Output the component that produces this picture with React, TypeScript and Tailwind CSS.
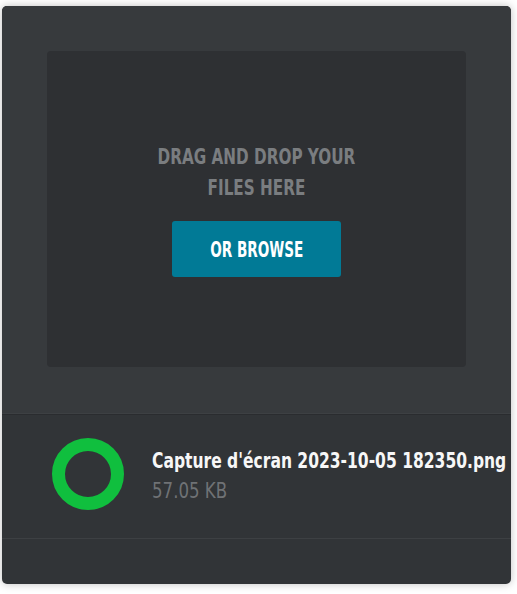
import React from "react";

const font = { fontFamily: '"DejaVu Sans Condensed", "DejaVu Sans", sans-serif' };

export default function App() {
  return (
    <div className="min-h-[594px] w-[517px] bg-white pt-[6px] pl-[2px]" style={font}>
      <div className="w-[509px] overflow-hidden rounded-[5px] bg-[#313437] shadow-[0_0_8px_rgba(0,0,0,0.25)]">
        <div className="bg-[#373a3d] px-[45px] pt-[45px] pb-[46px]">
          <div className="flex h-[316px] flex-col items-center rounded-[4px] bg-[#2e3033] pt-[90px]">
            <div className="scale-x-[0.77] text-center text-[22px] font-bold leading-[31px] whitespace-nowrap text-[#7a7d80]">
              DRAG AND DROP YOUR
              <br />
              FILES HERE
            </div>
            <button className="mt-[18px] flex h-[56px] w-[169px] items-center justify-center rounded-[3px] bg-[#017a96] pt-[3px] text-white">
              <span className="scale-x-[0.72] text-[21px] font-bold whitespace-nowrap">OR BROWSE</span>
            </button>
          </div>
        </div>
        <div className="border-t border-[#3d4043] shadow-[inset_0_1px_0_#2a2c2f]">
          <div className="flex h-[124px] items-start pl-[48px] pt-[22px]">
            <svg width="76" height="76" viewBox="0 0 76 76" className="shrink-0">
              <circle cx="38" cy="38" r="29.5" fill="none" stroke="#10bf3e" strokeWidth="13" />
            </svg>
            <div className="ml-[26px] mt-[10px] flex flex-col">
              <div className="origin-left scale-x-[0.785] whitespace-nowrap text-[22px] font-bold leading-[30px] text-[#f7f7f7]">
                Capture d'écran 2023-10-05 182350.png
              </div>
              <div className="origin-left scale-x-[0.84] text-[22px] leading-[30px] text-[#6f7275]">57.05 KB</div>
            </div>
          </div>
        </div>
        <div className="h-[46px] border-t border-[#3d4043]" />
      </div>
    </div>
  );
}
